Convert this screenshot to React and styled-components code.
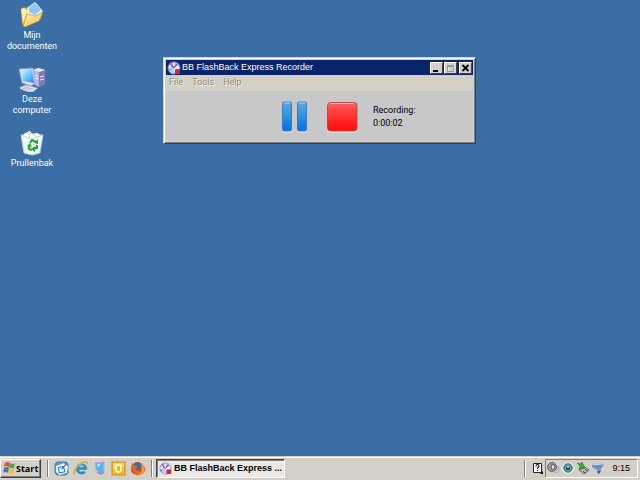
import React from "react";
import styled, { createGlobalStyle } from "styled-components";

const GlobalStyle = createGlobalStyle`
  * { box-sizing: border-box; }
  body { margin: 0; background: #3a6ea5; }
  button { font: inherit; color: inherit; margin: 0; border-radius: 0; }
`;

const Desktop = styled.div`
  min-height: 100vh;
  display: flex;
  flex-direction: column;
  background: #3a6ea5;
  font-family: Roboto, "Liberation Sans", sans-serif;
  font-size: 9px;
  line-height: 11px;
  color: #000;
`;

const Workspace = styled.main`
  position: relative;
  flex: 1;
`;

const ShortcutList = styled.nav`
  display: flex;
  flex-direction: column;
  width: 64px;
`;

const Shortcut = styled.button`
  height: 64px;
  padding: 0;
  border: 0;
  background: none;
  color: #fff;
  display: flex;
  flex-direction: column;
  align-items: center;
  gap: 2px;
`;

const ShortcutLabel = styled.span`
  width: 56px;
  text-align: center;
`;

const Window = styled.section`
  position: absolute;
  left: 163px;
  top: 57px;
  width: 313px;
  border: 1px solid;
  border-color: #d4d0c8 #404040 #404040 #d4d0c8;
  box-shadow: inset 1px 1px #fff, inset -1px -1px #808080;
  padding: 2px;
  background: #d4d0c8;
`;

const TitleBar = styled.header`
  height: 15px;
  display: flex;
  align-items: center;
  gap: 1px;
  padding: 0 1px;
  background: #0a246a;
  color: #fff;
`;

const Title = styled.h1`
  flex: 1;
  margin: 0;
  font-family: "Liberation Sans", Arial, sans-serif;
  font-size: 9px;
  line-height: 13px;
  font-weight: 400;
  white-space: nowrap;
`;

const CaptionButton = styled.button`
  width: 13px;
  height: 12px;
  padding: 0;
  border: 1px solid;
  border-color: #fff #404040 #404040 #fff;
  background: #d4d0c8;
  display: grid;
  place-items: center;
  margin-left: ${(p) => (p.$spaced ? "1px" : "0")};
`;

const MenuBar = styled.nav`
  display: flex;
  align-items: flex-start;
  gap: 9px;
  height: 16px;
  padding: 2px 3px 0;
`;

const MenuButton = styled.button`
  border: 0;
  padding: 0;
  background: none;
  color: #8c8984;
  text-shadow: 1px 1px #f4f2ee;
`;

const RecorderPanel = styled.div`
  display: flex;
  align-items: center;
  height: 50px;
  padding: 2px 59px 0 115px;
  background: #c8c8c8;
`;

const MediaButton = styled.button`
  padding: 0;
  border: 0;
  background: none;
  display: flex;
  margin-right: ${(p) => p.$gap};
`;

const Status = styled.div`
  line-height: 13px;
  white-space: nowrap;
`;

const TaskBar = styled.footer`
  display: flex;
  align-items: center;
  height: 24px;
  padding: 0 2px 1px 0;
  background: #d4d0c8;
  border-top: 1px solid #d4d0c8;
  box-shadow: inset 0 1px #fff;
`;

const StartButton = styled.button`
  display: flex;
  align-items: center;
  width: 41px;
  height: 19px;
  padding: 0 1px;
  background: #d4d0c8;
  border: 1px solid;
  border-color: #fff #404040 #404040 #fff;
  box-shadow: inset -1px -1px #808080;
  font-weight: 700;
  font-family: "Open Sans", "Noto Sans", sans-serif;
`;

const Divider = styled.span`
  width: 2px;
  height: 17px;
  border-left: 1px solid #808080;
  border-right: 1px solid #fff;
  margin: ${(p) => p.$margin};
`;

const QuickLaunch = styled.div`
  display: flex;
  align-items: center;
  gap: 4px;
`;

const IconButton = styled.button`
  display: flex;
  padding: 0;
  border: 0;
  background: none;
`;

const TaskButton = styled.button`
  display: flex;
  align-items: center;
  gap: 2px;
  width: 129px;
  height: 19px;
  padding: 0 2px;
  border: 1px solid;
  border-color: #404040 #fff #fff #404040;
  box-shadow: inset 1px 1px #808080;
  background: #ebe9e5;
  font-family: "Liberation Sans", Arial, sans-serif;
  font-weight: 700;
  white-space: nowrap;
`;

const Spacer = styled.div`
  flex: 1;
`;

const Tray = styled.div`
  display: flex;
  align-items: center;
  gap: 1px;
  height: 19px;
  padding: 0 7px 0 0;
  margin-left: 1px;
  border: 1px solid;
  border-color: #808080 #fff #fff #808080;
`;

const Clock = styled.time`
  margin-left: 6px;
  font-family: "Liberation Sans", Arial, sans-serif;
`;

function DocumentsIcon() {
  return (
    <svg width="28" height="28" viewBox="0 0 28 28" aria-hidden="true">
      <defs>
        <linearGradient id="folder" x1="0" y1="0" x2="1" y2="1">
          <stop offset="0" stopColor="#fff6b4" />
          <stop offset="1" stopColor="#eebd48" />
        </linearGradient>
      </defs>
      <path d="M3 9l3-2 4 2 14 2-1 8-16 7-3-2z" fill="#e5bb50" stroke="#9c7b2a" strokeWidth=".6" />
      <path d="M9 8l8-6 8 9-8 10-8-4z" fill="#e5f4ff" stroke="#88b4db" strokeWidth=".7" />
      <path d="M11 8l6-5 6 7-6 5-6-2z" fill="#91c8f2" />
      <path d="M3 9l2 14 4-10 8 2-6-3-5-4z" fill="#fff0a0" />
      <path d="M5 26l4-12 8 2 8-4-4 9-14 6z" fill="url(#folder)" stroke="#b58b2c" strokeWidth=".6" />
    </svg>
  );
}

function ComputerIcon() {
  return (
    <svg width="28" height="28" viewBox="0 0 28 28" aria-hidden="true">
      <defs>
        <linearGradient id="screen" x1="0" y1="0" x2="1" y2="1">
          <stop offset="0" stopColor="#d5f8ff" />
          <stop offset=".5" stopColor="#6ccaff" />
          <stop offset="1" stopColor="#168ae8" />
        </linearGradient>
      </defs>
      <path d="M15 6l5-2 7 2v14l-6 3-6-3z" fill="#b6b5da" />
      <path d="M21 8l6-2v14l-6 3z" fill="#7d7bb5" />
      <path d="M15 6l5-2 7 2-6 2z" fill="#e5e4f5" />
      <path d="M17 11l3 1m-3 2l3 1m2-2l4-1m-4 4l4-1" stroke="#ececff" strokeWidth="1" />
      <path d="M8 19l6 1 1 3-7 2-3-2z" fill="#a3a1cf" />
      <path d="M1 5l14-1 2 15-4 3-9-3z" fill="#dedced" stroke="#9490bf" strokeWidth=".6" />
      <path d="M3 6l11-1 2 14-11-2z" fill="url(#screen)" />
      <path d="M2 23l6-2 12 3-5 4h-5l-8-3z" fill="#dfdcf2" stroke="#9290c3" strokeWidth=".6" />
      <path d="M6 23l9 2m-11-1l8 2" stroke="#a9a7d0" strokeWidth=".7" />
    </svg>
  );
}

function RecycleIcon() {
  return (
    <svg width="28" height="28" viewBox="0 0 28 28" aria-hidden="true">
      <path d="M3 7l8-2 14 2-4 18-6 2-9-2z" fill="#d5e4eb" stroke="#93b8ce" strokeWidth=".7" />
      <path d="M5 8l2-3 5-2 2 3 6-1 3 4-2 5-13 1z" fill="#fff" />
      <path d="M8 5l4 1-1 4m3-4l5 3m-9-5l3 2" stroke="#d9d4a5" fill="none" />
      <path d="M3 7l10 4 12-4-3 18-8 2-8-2z" fill="#f2f8fb" fillOpacity=".88" stroke="#b0cbd9" strokeWidth=".7" />
      <g fill="none" stroke="#22a638" strokeWidth="2">
        <path d="M12 15l2-3 4 2" />
        <path d="M19 17v3h-3" />
        <path d="M14 22l-3-1v-3" />
      </g>
      <path d="M16 15l4 1V11zM17 18l-4 3 4 3zM9 18l3-3 2 4z" fill="#22a638" />
    </svg>
  );
}

function RecorderIcon({ size = 14 }) {
  return (
    <svg width={size} height={size} viewBox="0 0 14 14" aria-hidden="true">
      <circle cx="7" cy="7" r="6" fill="#eeeafa" stroke="#8a80bd" />
      <path d="M7 7L2 3l3-2zM7 7l-5 4-1-3z" fill="#9183c2" />
      <path d="M7 7l1-6 4 3z" fill="#b5addd" />
      <path d="M7 7l3-4M7 7L4 5" stroke="#564a8a" />
      <path d="M3 9l3-2 2 5-3 1z" fill="#a7d6ee" />
      <rect x="8" y="8" width="5" height="5" rx="1" fill="#db2135" />
    </svg>
  );
}

function MinimizeGlyph() {
  return <svg width="9" height="8" viewBox="0 0 9 8" aria-hidden="true"><path d="M1 6h5v2H1z" /></svg>;
}

function MaximizeGlyph() {
  return (
    <svg width="9" height="8" viewBox="0 0 9 8" aria-hidden="true">
      <path d="M2 1.5h7v7H2z" fill="none" stroke="#fff" />
      <path d="M1 1h7v7H1zM2 3v4h5V3z" fill="#9a9791" fillRule="evenodd" />
    </svg>
  );
}

function CloseGlyph() {
  return (
    <svg width="9" height="8" viewBox="0 0 9 8" aria-hidden="true">
      <path d="M1.5 1l6 6m0-6l-6 6" stroke="#000" strokeWidth="1.8" />
    </svg>
  );
}

function PauseIcon() {
  return (
    <svg width="27" height="32" viewBox="0 0 27 32" aria-hidden="true">
      <defs>
        <linearGradient id="pause" x1="0" y1="0" x2="0" y2="1">
          <stop offset="0" stopColor="#58a9e5" />
          <stop offset=".45" stopColor="#3494e2" />
          <stop offset="1" stopColor="#0070e4" />
        </linearGradient>
      </defs>
      {[1, 16].map((x) => (
        <g key={x}>
          <rect x={x} y="1.5" width="10" height="30" rx="2" fill="#eee" />
          <rect x={x + 0.5} y="1" width="9" height="29" rx="1.5" fill="url(#pause)" stroke="#397eb8" />
          <path d={`M${x + 2} 2h6`} stroke="#a7d8f7" />
        </g>
      ))}
    </svg>
  );
}

function StopIcon() {
  return (
    <svg width="32" height="32" viewBox="0 0 32 32" aria-hidden="true">
      <defs>
        <linearGradient id="stop" x1="0" y1="0" x2="0" y2="1">
          <stop offset="0" stopColor="#ff6262" />
          <stop offset=".5" stopColor="#ff3030" />
          <stop offset="1" stopColor="#ff0b0b" />
        </linearGradient>
      </defs>
      <rect x="1" y="2" width="30" height="29.5" rx="3" fill="#f2eeee" />
      <rect x="1.5" y="1.5" width="29.5" height="28.5" rx="3" fill="url(#stop)" stroke="#ad5050" />
      <path d="M4 2.5h24" stroke="#ffaaaa" />
    </svg>
  );
}

function WindowsIcon() {
  return (
    <svg width="14" height="14" viewBox="0 0 14 14" aria-hidden="true">
      <path d="M3 2q2-2 5 0L7 6Q4 4 2 6z" fill="#e6502e" />
      <path d="M8 2q3 2 5 0l-1 5q-3 1-5-1z" fill="#55a63c" />
      <path d="M2 7q3-2 5 0l-1 5q-3-2-5 0z" fill="#3c75d2" />
      <path d="M7 7q3 2 5 1l-1 4q-3 2-5 0z" fill="#efbf35" />
    </svg>
  );
}

function ShowDesktopIcon() {
  return (
    <svg width="15" height="15" viewBox="0 0 14 14" aria-hidden="true">
      <path d="M3 1h8l2 2v8l-2 2H3l-2-2V3z" fill="#5b9dca" stroke="#3b83b5" />
      <path d="M2 5l7-3 4 3-1 6-7 2-3-3z" fill="#f5fbff" />
      <path d="M4 6l5-1 1 5-5 1zM7 8l5-6" fill="none" stroke="#2c78af" />
    </svg>
  );
}

function ExplorerIcon() {
  return (
    <svg width="15" height="15" viewBox="0 0 14 14" aria-hidden="true">
      <path d="M11 10a4 4 0 1 1 1-3H4" fill="none" stroke="#268fd1" strokeWidth="2.5" />
      <path d="M2 12C-1 12 3 5 8 2c4-2 6-2 5 1" fill="none" stroke="#dfaa25" strokeWidth="1.4" />
      <path d="M4 5q3-3 6 0" fill="none" stroke="#78c8ed" />
    </svg>
  );
}

function NetworkIcon() {
  return (
    <svg width="15" height="15" viewBox="0 0 14 14" aria-hidden="true">
      <path d="M3 2l8-1v9l-7-1z" fill="#50b5f1" stroke="#a5a8d5" />
      <path d="M5 3l4-1-4 4z" fill="#c0efff" />
      <path d="M7 9l4 1v2l-3 1-4-2z" fill="#9399c8" />
    </svg>
  );
}

function OutlookIcon() {
  return (
    <svg width="15" height="15" viewBox="0 0 14 14" aria-hidden="true">
      <path d="M1 1h12v12H1z" fill="#f2bd27" stroke="#c98f12" />
      <path d="M2 2h10v3L2 8z" fill="#ffe069" />
      <ellipse cx="7" cy="7" rx="2.5" ry="3.3" fill="#f4b51c" stroke="#fff" strokeWidth="1.4" />
    </svg>
  );
}

function FirefoxIcon() {
  return (
    <svg width="15" height="15" viewBox="0 0 14 14" aria-hidden="true">
      <circle cx="7" cy="7" r="6" fill="#d94d1d" />
      <circle cx="7" cy="5" r="3.5" fill="#386bab" />
      <path d="M2 1l1 3h3l1 2-2 1 1 2 4 1 2-3-1-4 3 3c1 4-2 7-6 7S0 11 1 7z" fill="#ed681e" />
      <path d="M10 3l3 3c1 4-2 7-5 7 3-2 4-5 2-10z" fill="#f5a324" />
      <path d="M2 6q0 5 4 6-5 0-4-6z" fill="#9d2a1b" />
    </svg>
  );
}

function HelpIcon() {
  return (
    <svg width="13" height="14" viewBox="0 0 13 14" aria-hidden="true">
      <path d="M2.5 2.5h8v9h-8z" fill="#fff" stroke="#222" />
      <path d="M5 5.5q0-2 1.5-2t1.5 1.5q0 1-1.5 2v1m0 1v1" fill="none" stroke="#111" strokeWidth="1.2" />
      <path d="M9 13h3v-3z" fill="#111" />
    </svg>
  );
}

function SpeakerIcon() {
  return (
    <svg width="14" height="14" viewBox="0 0 14 14" aria-hidden="true">
      <circle cx="6" cy="6" r="4.5" fill="#9d9ca6" stroke="#64636c" />
      <ellipse cx="7" cy="6" rx="2" ry="2.5" fill="#dedee3" stroke="#555" />
      <path d="M9 10q4-1 3-5M8 12q6 0 5-6" fill="none" stroke="#aaa7c2" />
    </svg>
  );
}

function CaptureIcon() {
  return (
    <svg width="14" height="14" viewBox="0 0 14 14" aria-hidden="true">
      <circle cx="7" cy="7" r="5.5" fill="#477e83" stroke="#d8eaee" strokeWidth="1.5" />
      <circle cx="7" cy="7" r="2.7" fill="#273d48" stroke="#79b8b7" />
      <circle cx="7" cy="6" r="1" fill="#cbefea" />
    </svg>
  );
}

function SafelyRemoveIcon() {
  return (
    <svg width="14" height="14" viewBox="0 0 14 14" aria-hidden="true">
      <path d="M3 9l6-3 4 3-5 4z" fill="#b7b9af" stroke="#65675f" />
      <path d="M7 10l2 2m0-4l2 2" stroke="#4b4c48" />
      <path d="M1 2l3 1 2-2 3 6-6 1 1-3z" fill="#36aa32" stroke="#17741d" strokeWidth=".6" />
    </svg>
  );
}

function WirelessIcon() {
  return (
    <svg width="14" height="14" viewBox="0 0 14 14" aria-hidden="true">
      <path d="M1 4q6 1 12-1l-3 5q-4 1-9-2z" fill="#638fc5" />
      <path d="M3 7q4 2 8 0l-2 3q-3 1-6-3z" fill="#83a9d6" />
      <path d="M6 10l4-1-1 3-2 1z" fill="#3b61a3" />
      <path d="M1 3q5 0 12-1" fill="none" stroke="#a8c4e4" />
    </svg>
  );
}

const shortcuts = [
  { label: "Mijn documenten", Icon: DocumentsIcon },
  { label: "Deze computer", Icon: ComputerIcon },
  { label: "Prullenbak", Icon: RecycleIcon },
];

const launchers = [
  { label: "Bureaublad weergeven", Icon: ShowDesktopIcon },
  { label: "Internet Explorer", Icon: ExplorerIcon },
  { label: "Netwerk", Icon: NetworkIcon },
  { label: "Outlook", Icon: OutlookIcon },
  { label: "Firefox", Icon: FirefoxIcon },
];

const trayItems = [
  { label: "Volume", Icon: SpeakerIcon },
  { label: "Opname", Icon: CaptureIcon },
  { label: "Hardware verwijderen", Icon: SafelyRemoveIcon },
  { label: "Draadloos netwerk", Icon: WirelessIcon },
];

export default function App() {
  return (
    <Desktop>
      <GlobalStyle />
      <Workspace>
        <ShortcutList>
          {shortcuts.map(({ label, Icon }) => (
            <Shortcut key={label}>
              <Icon />
              <ShortcutLabel>{label}</ShortcutLabel>
            </Shortcut>
          ))}
        </ShortcutList>
        <Window>
          <TitleBar>
            <RecorderIcon />
            <Title>BB FlashBack Express Recorder</Title>
            <CaptionButton aria-label="Minimize"><MinimizeGlyph /></CaptionButton>
            <CaptionButton aria-label="Maximize" disabled><MaximizeGlyph /></CaptionButton>
            <CaptionButton aria-label="Close" $spaced><CloseGlyph /></CaptionButton>
          </TitleBar>
          <MenuBar>
            {["File", "Tools", "Help"].map((item) => (
              <MenuButton key={item} disabled>{item}</MenuButton>
            ))}
          </MenuBar>
          <RecorderPanel>
            <MediaButton aria-label="Pause" $gap="18px"><PauseIcon /></MediaButton>
            <MediaButton aria-label="Stop" $gap="15px"><StopIcon /></MediaButton>
            <Status>
              <div>Recording:</div>
              <div>0:00:02</div>
            </Status>
          </RecorderPanel>
        </Window>
      </Workspace>
      <TaskBar>
        <StartButton><WindowsIcon />Start</StartButton>
        <Divider $margin="0 5px 0 6px" />
        <QuickLaunch>
          {launchers.map(({ label, Icon }) => (
            <IconButton key={label} aria-label={label}><Icon /></IconButton>
          ))}
        </QuickLaunch>
        <Divider $margin="0 3px 0 6px" />
        <TaskButton><RecorderIcon size={15} />BB FlashBack Express ...</TaskButton>
        <Spacer />
        <Divider $margin="0 5px 0 0" />
        <IconButton aria-label="Help"><HelpIcon /></IconButton>
        <Tray>
          {trayItems.map(({ label, Icon }) => (
            <IconButton key={label} aria-label={label}><Icon /></IconButton>
          ))}
          <Clock>9:15</Clock>
        </Tray>
      </TaskBar>
    </Desktop>
  );
}
